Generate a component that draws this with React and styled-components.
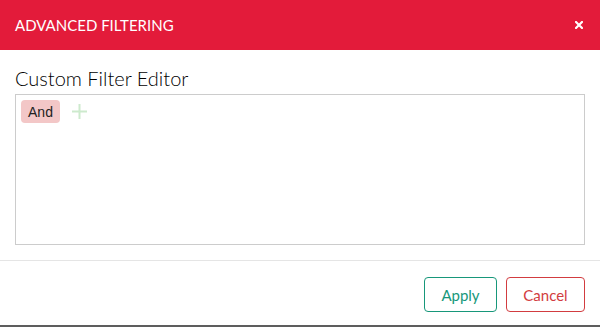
import React from 'react'
import styled, { createGlobalStyle } from 'styled-components'

const GlobalStyle = createGlobalStyle`
  html, body {
    margin: 0;
    padding: 0;
    background: #fff;
  }
  body {
    font-family: Lato, "Open Sans", sans-serif;
  }
`

const Page = styled.div`
  width: 600px;
  height: 327px;
  display: flex;
  flex-direction: column;
  overflow: hidden;
`

const Modal = styled.div`
  flex: 1;
  display: flex;
  flex-direction: column;
  background: #fff;
`

const Header = styled.div`
  height: 50px;
  background: #e31b3a;
  display: flex;
  align-items: center;
  justify-content: space-between;
  padding: 0 16px 0 15px;
  box-sizing: border-box;
`

const Title = styled.h1`
  margin: 0;
  font-size: 15px;
  font-weight: 400;
  color: #fff;
  text-transform: uppercase;
`

const Close = styled.button`
  border: 0;
  background: none;
  padding: 0;
  width: 10px;
  height: 10px;
  display: flex;
  align-items: center;
  justify-content: center;
  cursor: pointer;
`

const Body = styled.div`
  padding: 16px 15px 15px;
  display: flex;
  flex-direction: column;
  gap: 4px;
`

const EditorTitle = styled.h2`
  margin: 0;
  font-size: 20px;
  line-height: 24px;
  font-weight: 300;
  color: #000;
`

const EditorBox = styled.div`
  height: 151px;
  box-sizing: border-box;
  border: 1px solid #cccccc;
  padding: 5px;
  display: flex;
  align-items: flex-start;
  gap: 12px;
`

const Group = styled.span`
  display: inline-flex;
  align-items: center;
  justify-content: center;
  width: 39px;
  height: 23px;
  border-radius: 4px;
  background: #f3c7c7;
  color: #222;
  font-family: "Liberation Sans", Arial, sans-serif;
  font-size: 14px;
`

const AddButton = styled.button`
  border: 0;
  background: none;
  padding: 0;
  margin-top: 4px;
  width: 15px;
  height: 15px;
  display: flex;
  cursor: pointer;
`

const Footer = styled.div`
  border-top: 1px solid #e5e5e5;
  padding: 16px 15px 0;
  display: flex;
  justify-content: flex-end;
  gap: 9px;
`

const ActionButton = styled.button`
  height: 35px;
  width: ${p => p.$width}px;
  padding: 0;
  border: 1px solid ${p => p.$color};
  color: ${p => p.$color};
  background: #fff;
  border-radius: 4px;
  font-family: Lato, sans-serif;
  font-size: 15px;
  cursor: pointer;
`

const Underlay = styled.div`
  height: 2px;
  background: #5d5d5d;
`

export default function App() {
  return (
    <>
      <GlobalStyle />
      <Page>
        <Modal>
          <Header>
            <Title>Advanced Filtering</Title>
            <Close aria-label="close">
              <svg width="8" height="8" viewBox="0 0 8 8">
                <path d="M1 1 L7 7 M7 1 L1 7" stroke="#fff" strokeWidth="2.2" strokeLinecap="square" />
              </svg>
            </Close>
          </Header>
          <Body>
            <EditorTitle>Custom Filter Editor</EditorTitle>
            <EditorBox>
              <Group>And</Group>
              <AddButton aria-label="add">
                <svg width="15" height="15" viewBox="0 0 15 15">
                  <path d="M7.5 0 V15 M0 7.5 H15" stroke="#cdeacd" strokeWidth="2" />
                </svg>
              </AddButton>
            </EditorBox>
          </Body>
          <Footer>
            <ActionButton $color="#17977a" $width={73}>Apply</ActionButton>
            <ActionButton $color="#d23c40" $width={79}>Cancel</ActionButton>
          </Footer>
        </Modal>
        <Underlay />
      </Page>
    </>
  )
}
